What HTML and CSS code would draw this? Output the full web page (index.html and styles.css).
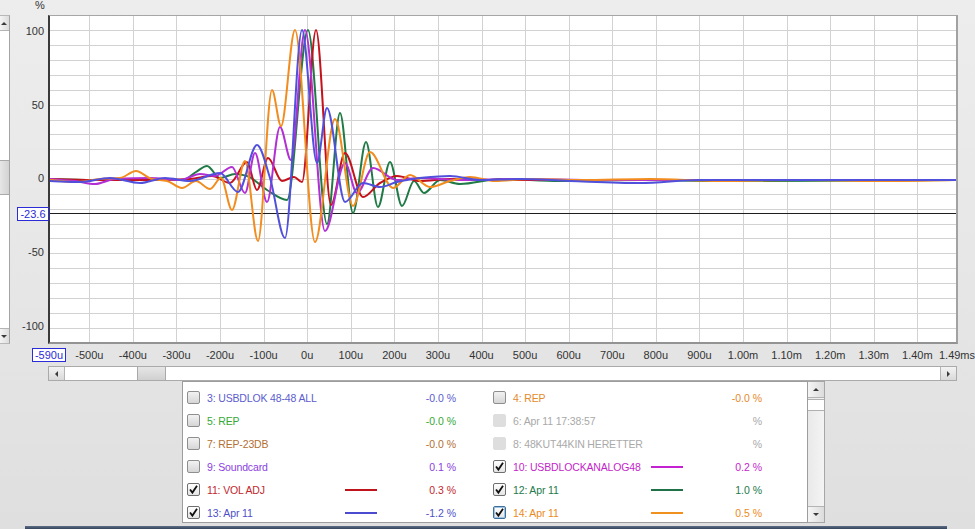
FILE: index.html
```html
<!DOCTYPE html>
<html lang="en">
<head>
<meta charset="utf-8">
<title>Impulse overlay</title>
<link rel="stylesheet" href="styles.css">
</head>
<body>
<div class="app">
  <div class="chart">
    <div class="vscroll-left">
      <div class="sb-btn"><span class="arr arr-up"></span></div>
      <div class="sb-track"><div class="sb-thumb-v"></div></div>
      <div class="sb-btn"><span class="arr arr-down"></span></div>
    </div>
    <div class="yaxis">
      <span class="unit">%</span>
      <span class="ylab" style="top:24px">100</span>
      <span class="ylab" style="top:98px">50</span>
      <span class="ylab" style="top:171px">0</span>
      <span class="ylab" style="top:245px">-50</span>
      <span class="ylab" style="top:319px">-100</span>
      <span class="marker marker-y">-23.6</span>
    </div>
    <div class="plot">
      <svg id="plot-svg" width="906" height="326" viewBox="50 16 906 326" xmlns="http://www.w3.org/2000/svg">
        <g id="grid" stroke="#d2d2d2" stroke-width="1" fill="none"></g>
        <line x1="50" y1="213.5" x2="956" y2="213.5" stroke="#1e1e1e" stroke-width="1"></line>
        <g id="curves" fill="none" stroke-width="2" stroke-linejoin="round" stroke-linecap="round"></g>
      </svg>
    </div>
    <div class="xaxis">
      <span class="marker marker-x">-590u</span>
      <span class="xlab" style="left:79.3px">-500u</span>
      <span class="xlab" style="left:122.9px">-400u</span>
      <span class="xlab" style="left:166.5px">-300u</span>
      <span class="xlab" style="left:210px">-200u</span>
      <span class="xlab" style="left:253.6px">-100u</span>
      <span class="xlab" style="left:297.2px">0u</span>
      <span class="xlab" style="left:340.8px">100u</span>
      <span class="xlab" style="left:384.4px">200u</span>
      <span class="xlab" style="left:427.9px">300u</span>
      <span class="xlab" style="left:471.5px">400u</span>
      <span class="xlab" style="left:515.1px">500u</span>
      <span class="xlab" style="left:558.7px">600u</span>
      <span class="xlab" style="left:602.3px">700u</span>
      <span class="xlab" style="left:645.8px">800u</span>
      <span class="xlab" style="left:689.4px">900u</span>
      <span class="xlab" style="left:733px">1.00m</span>
      <span class="xlab" style="left:776.6px">1.10m</span>
      <span class="xlab" style="left:820.2px">1.20m</span>
      <span class="xlab" style="left:863.7px">1.30m</span>
      <span class="xlab" style="left:907.3px">1.40m</span>
      <span class="xlab" style="left:947px">1.49ms</span>
    </div>
    <div class="hscroll">
      <div class="sb-btn-h"><span class="arr arr-left"></span></div>
      <div class="sb-track-h"><div class="sb-thumb-h"></div></div>
      <div class="sb-btn-h"><span class="arr arr-right"></span></div>
    </div>
  </div>

  <div class="legend-area">
    <div class="legend">
      <div class="item c-3"><span class="cb"></span><span class="name">3: USBDLOK 48-48 ALL</span><span class="sample"></span><span class="val">-0.0 %</span></div>
      <div class="item c-4"><span class="cb"></span><span class="name">4: REP</span><span class="sample"></span><span class="val">-0.0 %</span></div>
      <div class="item c-5"><span class="cb"></span><span class="name">5: REP</span><span class="sample"></span><span class="val">-0.0 %</span></div>
      <div class="item c-6"><span class="cb disabled"></span><span class="name">6: Apr 11 17:38:57</span><span class="sample"></span><span class="val">%</span></div>
      <div class="item c-7"><span class="cb"></span><span class="name">7: REP-23DB</span><span class="sample"></span><span class="val">-0.0 %</span></div>
      <div class="item c-8"><span class="cb disabled"></span><span class="name">8: 48KUT44KIN HERETTER</span><span class="sample"></span><span class="val">%</span></div>
      <div class="item c-9"><span class="cb"></span><span class="name">9: Soundcard</span><span class="sample"></span><span class="val">0.1 %</span></div>
      <div class="item c-10"><span class="cb checked"><svg viewBox="0 0 13 13" width="13" height="13"><path d="M3 6.5 L5.4 9.6 L10 2.8" fill="none" stroke="#111" stroke-width="1.8"/></svg></span><span class="name">10: USBDLOCKANALOG48</span><span class="sample on"></span><span class="val">0.2 %</span></div>
      <div class="item c-11"><span class="cb checked"><svg viewBox="0 0 13 13" width="13" height="13"><path d="M3 6.5 L5.4 9.6 L10 2.8" fill="none" stroke="#111" stroke-width="1.8"/></svg></span><span class="name">11: VOL ADJ</span><span class="sample on"></span><span class="val">0.3 %</span></div>
      <div class="item c-12"><span class="cb checked"><svg viewBox="0 0 13 13" width="13" height="13"><path d="M3 6.5 L5.4 9.6 L10 2.8" fill="none" stroke="#111" stroke-width="1.8"/></svg></span><span class="name">12: Apr 11</span><span class="sample on"></span><span class="val">1.0 %</span></div>
      <div class="item c-13"><span class="cb checked"><svg viewBox="0 0 13 13" width="13" height="13"><path d="M3 6.5 L5.4 9.6 L10 2.8" fill="none" stroke="#111" stroke-width="1.8"/></svg></span><span class="name">13: Apr 11</span><span class="sample on"></span><span class="val">-1.2 %</span></div>
      <div class="item c-14"><span class="cb checked focus"><svg viewBox="0 0 13 13" width="13" height="13"><path d="M3 6.5 L5.4 9.6 L10 2.8" fill="none" stroke="#111" stroke-width="1.8"/></svg></span><span class="name">14: Apr 11</span><span class="sample on"></span><span class="val">0.5 %</span></div>
    </div>
    <div class="vscroll">
      <div class="sb-btn-v"><span class="arr arr-up"></span></div>
      <div class="sb-track-v"><div class="sb-thumb-small"></div></div>
      <div class="sb-btn-v"><span class="arr arr-down"></span></div>
    </div>
  </div>
  <div class="taskbar"></div>
</div>
<script src="script.js"></script>
</body>
</html>
```

FILE: styles.css
```css
* { box-sizing: border-box; }
html, body { margin: 0; padding: 0; }
body {
  width: 975px;
  height: 529px;
  overflow: hidden;
  background: linear-gradient(180deg, #ededed 0%, #e6e6e6 55%, #dfdfdf 100%);
  font-family: "Liberation Sans", Arial, sans-serif;
  font-size: 11px;
  color: #333;
}
.app { display: flex; flex-direction: column; height: 529px; }

.chart {
  display: grid;
  grid-template-columns: 10px 38px 910px 1fr;
  grid-template-rows: 15px 329px 22px 15px;
}

/* left partial scrollbar */
.vscroll-left {
  grid-column: 1; grid-row: 2;
  display: flex; flex-direction: column;
  border-right: 1px solid #a4a4a4;
  border-top: 1px solid #b8b8b8;
  border-bottom: 1px solid #b8b8b8;
  background: #fff;
}
.sb-btn {
  height: 15px; flex: none;
  display: flex; align-items: center; justify-content: flex-end; padding-right: 2px;
  background: linear-gradient(90deg, #f4f4f4, #dcdcdc);
  border-bottom: 1px solid #b4b4b4;
}
.sb-btn:last-child { border-bottom: 0; border-top: 1px solid #b4b4b4; }
.sb-track { flex: 1; position: relative; }
.sb-thumb-v {
  margin-top: 129px; height: 35px;
  background: linear-gradient(90deg, #e6e6e6, #d2d2d2);
  border-top: 1px solid #a9a9a9; border-bottom: 1px solid #a9a9a9;
}

.arr { display: block; width: 0; height: 0; }
.arr-up { border-left: 3px solid transparent; border-right: 3px solid transparent; border-bottom: 3px solid #3a3a3a; }
.arr-down { border-left: 3px solid transparent; border-right: 3px solid transparent; border-top: 3px solid #3a3a3a; }
.arr-left { border-top: 3px solid transparent; border-bottom: 3px solid transparent; border-right: 3px solid #3a3a3a; }
.arr-right { border-top: 3px solid transparent; border-bottom: 3px solid transparent; border-left: 3px solid #3a3a3a; }

/* y axis */
.yaxis { grid-column: 2; grid-row: 1 / 3; position: relative; }
.unit { position: absolute; left: 25px; top: -1px; line-height: 12px; font-size: 11px; color: #333; }
.ylab {
  position: absolute; right: 4px; line-height: 14px; color: #333;
}
.marker {
  position: absolute;
  border: 1px solid #2b2bd8;
  background: #fff;
  color: #2b2bd8;
  line-height: 12px;
  height: 14px;
  text-align: center;
  font-size: 11px;
}
.marker-y { left: 7px; top: 207px; width: 32px; }
.marker-x { left: 22px; top: 4px; width: 34px; }

/* plot */
.plot {
  grid-column: 3; grid-row: 2;
  background: #fff;
  border-top: 1px solid #a6a6a6;
  border-left: 2px solid #3a3a3a;
  border-right: 2px solid #a2a2a2;
  border-bottom: 2px solid #939393;
}
.plot svg { display: block; }

/* x axis */
.xaxis { grid-column: 2 / 5; grid-row: 3; position: relative; }
.xlab {
  position: absolute; top: 4px; line-height: 14px;
  transform: translateX(-50%); white-space: nowrap; color: #333;
}

/* horizontal scrollbar */
.hscroll {
  grid-column: 3; grid-row: 4;
  width: 909px;
  display: flex;
  border: 1px solid #aaaaaa;
  background: #fff;
}
.sb-btn-h {
  width: 16px; flex: none;
  display: flex; align-items: center; justify-content: center;
  background: linear-gradient(180deg, #f3f3f3, #d9d9d9);
}
.sb-btn-h:first-child { border-right: 1px solid #b4b4b4; }
.sb-btn-h:last-child { border-left: 1px solid #b4b4b4; }
.sb-track-h { flex: 1; }
.sb-thumb-h {
  margin-left: 72px; width: 29px; height: 100%;
  background: linear-gradient(180deg, #e6e6e6, #d0d0d0);
  border-left: 1px solid #a9a9a9; border-right: 1px solid #a9a9a9;
}

/* legend */
.legend-area { display: flex; margin-left: 182px; height: 142px; }
.legend {
  width: 626px;
  background: #fff;
  border: 1px solid #9d9d9d;
  padding: 4px 0 0 0;
  display: grid;
  grid-template-columns: 306px 306px;
  grid-auto-rows: 23px;
  align-content: start;
  font-size: 10.5px;
}
.item {
  display: grid;
  grid-template-columns: 4px 13px 7px 132px 6px 32px 79px;
  align-items: center;
}
.cb {
  grid-column: 2;
  width: 13px; height: 13px;
  border: 1px solid #8e8e8e;
  border-radius: 2px;
  background: linear-gradient(180deg, #f2f2f2 0%, #d6d6d6 100%);
  position: relative;
}
.cb.checked { background: linear-gradient(180deg, #ffffff 0%, #e4e4e4 100%); border-color: #6f6f6f; }
.cb.checked svg { position: absolute; left: -1px; top: -1px; }
.cb.focus { border-color: #3d6f9c; box-shadow: inset 0 0 0 1px #9ec3e3; }
.cb.disabled { background: #dedede; border-color: #dedede; }
.name { grid-column: 4; white-space: nowrap; overflow: hidden; line-height: 14px; letter-spacing: -0.15px; }
.sample { grid-column: 6; height: 2px; }
.val { grid-column: 7; text-align: right; line-height: 14px; }

.c-3 { color: #5c5ccf; }
.c-4 { color: #e5892c; }
.c-5 { color: #36a836; }
.c-6, .c-8 { color: #a9a9a9; }
.c-7 { color: #b36f33; }
.c-9 { color: #8a3ee0; }
.c-10 { color: #c31fc9; }
.c-11 { color: #c1272d; }
.c-12 { color: #237a4b; }
.c-13 { color: #4f4fc9; }
.c-14 { color: #eb8b22; }
.c-10 .sample { background: #c421d2; }
.c-11 .sample { background: #c0141d; }
.c-12 .sample { background: #1f7148; }
.c-13 .sample { background: #4b4bd2; }
.c-14 .sample { background: #f0901e; }

/* legend scrollbar */
.vscroll {
  width: 17px;
  display: flex; flex-direction: column;
  border: 1px solid #a6a6a6;
  border-left: 0;
  background: linear-gradient(90deg, #e9e9e9, #f4f4f4);
}
.sb-btn-v {
  height: 16px; flex: none;
  display: flex; align-items: center; justify-content: center;
  background: linear-gradient(90deg, #f5f5f5, #dcdcdc);
  border-bottom: 1px solid #b4b4b4;
}
.sb-btn-v:last-child { border-bottom: 0; border-top: 1px solid #b4b4b4; }
.sb-track-v { flex: 1; }
.sb-thumb-small {
  margin-top: 1px; height: 12px;
  background: #fff;
  border-top: 1px solid #b0b0b0; border-bottom: 1px solid #b0b0b0;
}

.taskbar {
  margin-top: 3px;
  margin-left: 25px;
  width: 922px;
  height: 3px;
  background: linear-gradient(180deg, #5d6e86, #34445c);
}
```

FILE: script.js
```js
(function () {
  var NS = 'http://www.w3.org/2000/svg';
  var Y0 = 179, SY = 1.487, X0 = 307.2, DX = 43.58;

  function el(tag, attrs, parent) {
    var e = document.createElementNS(NS, tag);
    for (var k in attrs) e.setAttribute(k, attrs[k]);
    parent.appendChild(e);
    return e;
  }

  var grid = document.getElementById('grid');
  for (var p = -100; p <= 100; p += 10) {
    var y = Math.round(Y0 - p * SY) + 0.5;
    el('line', { x1: 50, y1: y, x2: 956, y2: y }, grid);
  }
  for (var k = -5; k <= 14; k++) {
    var x = Math.round(X0 + k * DX) + 0.5;
    el('line', { x1: x, y1: 16, x2: x, y2: 342 }, grid);
  }

  // monotone-style cubic Hermite through points (x increasing)
  function path(pts) {
    var n = pts.length, m = [];
    for (var i = 0; i < n; i++) {
      if (i === 0) m[i] = (pts[1][1] - pts[0][1]) / (pts[1][0] - pts[0][0]);
      else if (i === n - 1) m[i] = (pts[i][1] - pts[i - 1][1]) / (pts[i][0] - pts[i - 1][0]);
      else {
        var d0 = (pts[i][1] - pts[i - 1][1]) / (pts[i][0] - pts[i - 1][0]);
        var d1 = (pts[i + 1][1] - pts[i][1]) / (pts[i + 1][0] - pts[i][0]);
        m[i] = (d0 * d1 <= 0) ? 0 : 2 / (1 / d0 + 1 / d1);
      }
    }
    var d = 'M' + pts[0][0] + ',' + pts[0][1];
    for (var j = 0; j < n - 1; j++) {
      var a = pts[j], b = pts[j + 1], h = (b[0] - a[0]) / 3;
      d += ' C' + (a[0] + h).toFixed(2) + ',' + (a[1] + m[j] * h).toFixed(2) +
        ' ' + (b[0] - h).toFixed(2) + ',' + (b[1] - m[j + 1] * h).toFixed(2) +
        ' ' + b[0] + ',' + b[1];
    }
    return d;
  }

  var series = [
    { c: '#1f7a46', p: [[50,179],[100,180],[150,179],[183,180],[196,172],[207,166],[220,178],[235,174],[247,176],[267,190],[287,200],[308,30],[327,224],[340,113],[353,213],[366,142],[378,207],[390,162],[402,206],[414,181],[424,193],[440,180],[460,184],[500,179],[560,181],[640,180],[720,181],[956,180]] },
    { c: '#c4121c', p: [[50,179],[100,180],[150,180],[190,179],[212,176],[230,183],[247,162],[257,190],[268,158],[282,181],[294,177],[302,182],[316,30],[331,205],[345,153],[363,197],[380,183],[397,176],[420,181],[450,179],[500,180],[600,180],[956,180]] },
    { c: '#b22fd3', p: [[50,179],[75,181],[95,184],[115,179],[150,178],[180,180],[200,174],[215,176],[232,167],[245,193],[255,153],[267,202],[280,127],[291,160],[305,30],[325,231],[345,163],[357,193],[373,168],[397,180],[420,178],[460,180],[520,179],[600,180],[956,180]] },
    { c: '#f28c1e', p: [[50,180],[75,182],[100,179],[120,178],[136,171],[152,179],[167,181],[182,188],[196,181],[210,189],[221,178],[232,210],[245,161],[258,241],[272,90],[281,126],[295,30],[315,242],[335,119],[353,206],[370,152],[393,188],[410,175],[430,187],[450,181],[470,177],[495,181],[530,179],[580,180],[650,179],[720,181],[800,180],[880,181],[956,180]] },
    { c: '#5150dc', p: [[50,181],[80,182],[110,178],[140,183],[165,178],[190,181],[220,173],[238,192],[257,145],[270,178],[285,238],[302,30],[317,163],[327,108],[345,202],[363,183],[380,187],[397,182],[420,178],[450,176],[480,180],[520,179],[570,181],[640,183],[700,180],[800,180],[956,180]] }
  ];

  var g = document.getElementById('curves');
  series.forEach(function (s) {
    el('path', { d: path(s.p), stroke: s.c }, g);
  });
})();
```
